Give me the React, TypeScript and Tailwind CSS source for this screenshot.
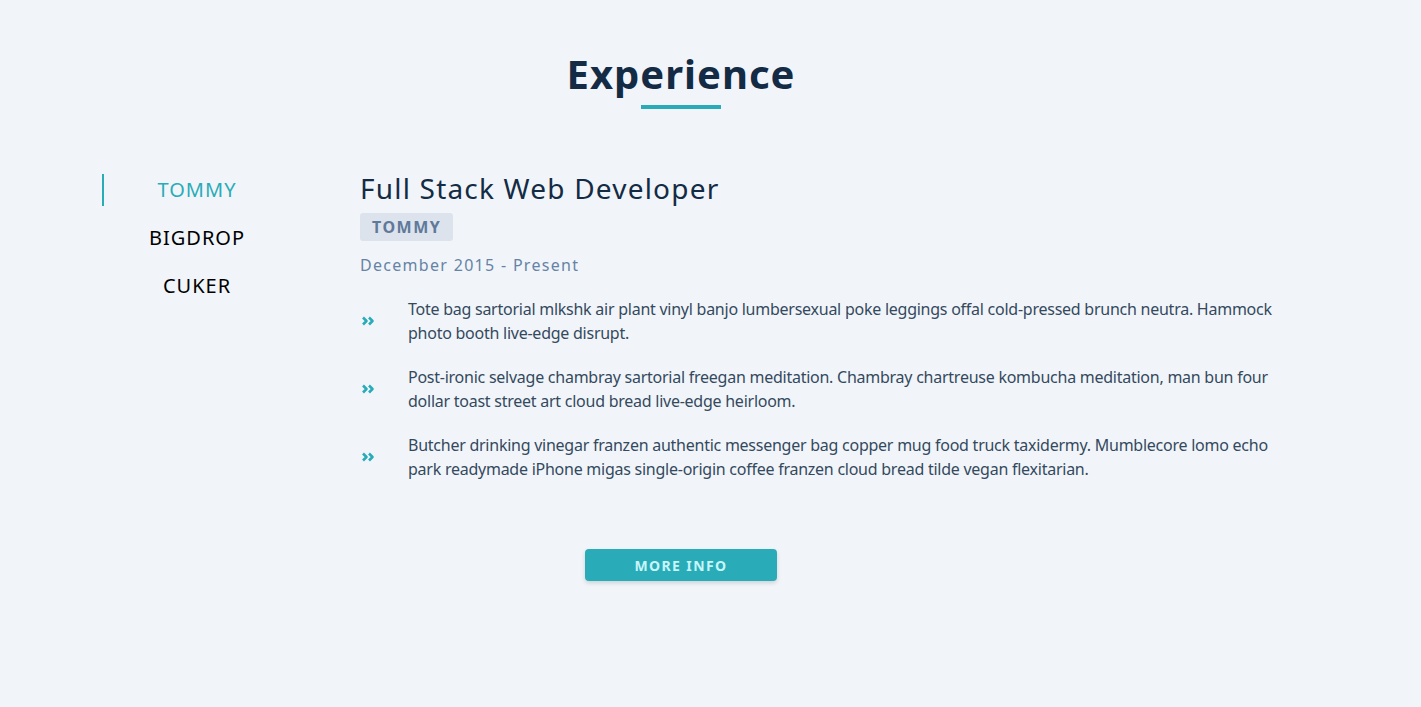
import React, { useState } from 'react';

const jobs = [
  {
    company: 'TOMMY',
    title: 'Full Stack Web Developer',
    range: 'December 2015 - Present',
    duties: [
      'Tote bag sartorial mlkshk air plant vinyl banjo lumbersexual poke leggings offal cold-pressed brunch neutra. Hammock photo booth live-edge disrupt.',
      'Post-ironic selvage chambray sartorial freegan meditation. Chambray chartreuse kombucha meditation, man bun four dollar toast street art cloud bread live-edge heirloom.',
      'Butcher drinking vinegar franzen authentic messenger bag copper mug food truck taxidermy. Mumblecore lomo echo park readymade iPhone migas single-origin coffee franzen cloud bread tilde vegan flexitarian.',
    ],
  },
  { company: 'BIGDROP', title: 'Front-End Engineer', range: 'May 2015 - December 2015', duties: [] },
  { company: 'CUKER', title: 'Web Developer', range: 'January 2014 - May 2015', duties: [] },
];

const DoubleChevron = () => (
  <svg width="14" height="10" viewBox="0 0 14 10" className="shrink-0 ml-[1px] text-[#2aacb8]" fill="none">
    <polyline points="2,1.5 5.5,5 2,8.5" stroke="currentColor" strokeWidth="2.6" strokeLinejoin="round" />
    <polyline points="8,1.5 11.5,5 8,8.5" stroke="currentColor" strokeWidth="2.6" strokeLinejoin="round" />
  </svg>
);

const App = () => {
  const [active, setActive] = useState(0);
  const job = jobs[active];

  return (
    <div className="min-h-screen bg-[#f1f5f9] font-['Noto_Sans',sans-serif] text-[#142b45]">
      <div className="ml-[102px] w-[1158px] pt-[48px] flex flex-col items-center">
        {/* Title */}
        <h2 className="text-[40px] leading-[52px] font-bold tracking-[1px] text-[#142b45]">Experience</h2>
        <div className="mt-[5px] w-[80px] h-[4px] bg-[#2aacb8]" />

        <div className="w-full flex mt-[65px]">
          {/* Company tabs */}
          <div className="w-[188px] shrink-0 flex flex-col">
            {jobs.map((j, i) => (
              <button
                key={j.company}
                onClick={() => setActive(i)}
                className={`h-[32px] mb-[16px] text-[20px] tracking-[1px] text-center border-l-2 ${
                  i === active ? 'border-[#2aacb8] text-[#2aacb8]' : 'border-transparent text-black'
                }`}
              >
                {j.company}
              </button>
            ))}
          </div>

          {/* Details */}
          <div className="ml-[70px] w-[915px] shrink-0">
            <h3 className="-mt-[2px] text-[28px] leading-[32px] tracking-[1.2px] text-[#142b45]">{job.title}</h3>
            <span className="inline-block mt-[9px] px-[12px] h-[28px] leading-[28px] rounded-[3px] bg-[#dce3ec] text-[16px] font-bold tracking-[1.5px] text-[#60799a]">
              {job.company}
            </span>
            <p className="mt-[12px] text-[16px] leading-[24px] tracking-[1.3px] text-[#6683a5]">{job.range}</p>
            <ul className="mt-[20px] flex flex-col gap-[20px]">
              {job.duties.map((d) => (
                <li key={d} className="flex items-center">
                  <DoubleChevron />
                  <span className="ml-[33px] text-[16px] leading-[24px] tracking-[-0.25px] text-[#34495e]">{d}</span>
                </li>
              ))}
            </ul>
          </div>
        </div>

        <button className="mt-[68px] w-[192px] h-[32px] rounded-[4px] bg-[#2aacb8] shadow-[0_2px_4px_rgba(0,0,0,0.15)] text-[14px] font-bold tracking-[1.4px] text-[#c7f5fa]">
          MORE INFO
        </button>
      </div>
    </div>
  );
};

export default App;
